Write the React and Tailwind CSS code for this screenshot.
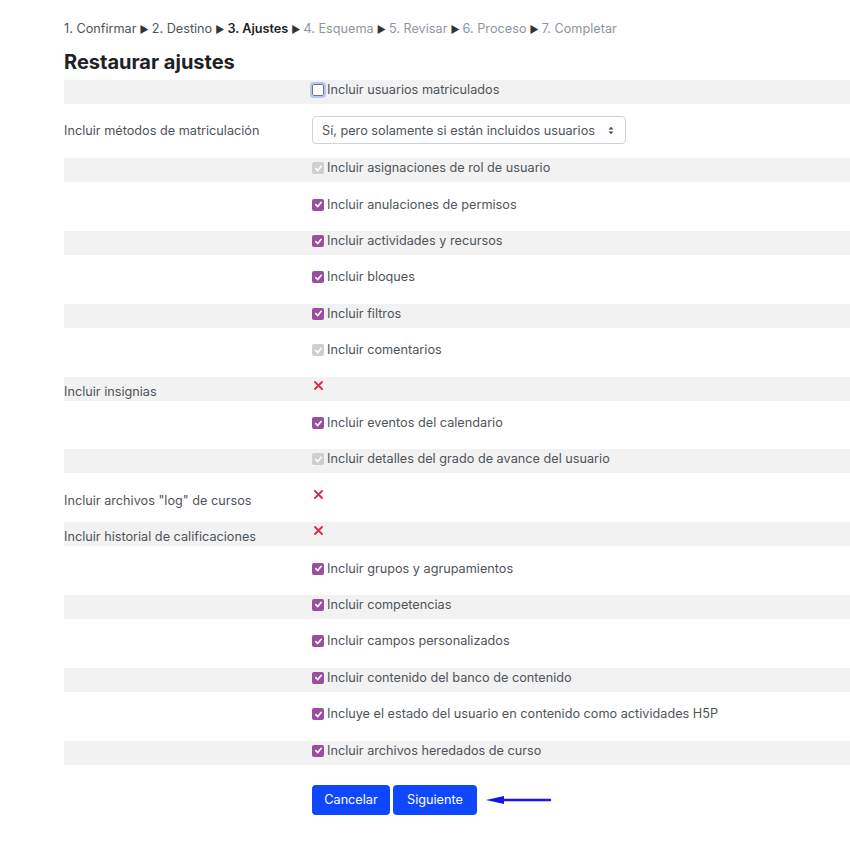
import React from "react";

const STEPS = [
  { text: "1. Confirmar", state: "done" },
  { text: "2. Destino", state: "done" },
  { text: "3. Ajustes", state: "current" },
  { text: "4. Esquema", state: "todo" },
  { text: "5. Revisar", state: "todo" },
  { text: "6. Proceso", state: "todo" },
  { text: "7. Completar", state: "todo" },
];

// kind: check | select | cross ; box: on | off | disabled
const ROWS = [
  { kind: "check", box: "off", text: "Incluir usuarios matriculados" },
  { kind: "select", label: "Incluir métodos de matriculación" },
  { kind: "check", box: "disabled", text: "Incluir asignaciones de rol de usuario" },
  { kind: "check", box: "on", text: "Incluir anulaciones de permisos" },
  { kind: "check", box: "on", text: "Incluir actividades y recursos" },
  { kind: "check", box: "on", text: "Incluir bloques" },
  { kind: "check", box: "on", text: "Incluir filtros" },
  { kind: "check", box: "disabled", text: "Incluir comentarios" },
  { kind: "cross", label: "Incluir insignias" },
  { kind: "check", box: "on", text: "Incluir eventos del calendario" },
  { kind: "check", box: "disabled", text: "Incluir detalles del grado de avance del usuario" },
  { kind: "cross", label: 'Incluir archivos "log" de cursos' },
  { kind: "cross", label: "Incluir historial de calificaciones" },
  { kind: "check", box: "on", text: "Incluir grupos y agrupamientos" },
  { kind: "check", box: "on", text: "Incluir competencias" },
  { kind: "check", box: "on", text: "Incluir campos personalizados" },
  { kind: "check", box: "on", text: "Incluir contenido del banco de contenido" },
  { kind: "check", box: "on", text: "Incluye el estado del usuario en contenido como actividades H5P" },
  { kind: "check", box: "on", text: "Incluir archivos heredados de curso" },
];

function Box({ state }) {
  if (state === "off") {
    return (
      <span className="w-[12px] h-[12px] rounded-[2px] border border-[#767676] bg-white outline outline-2 outline-[#b3c4fb] flex-shrink-0" />
    );
  }
  const bg = state === "on" ? "bg-[#9a4ea0]" : "bg-[#cfcfcf]";
  return (
    <span className={`w-[12px] h-[12px] rounded-[2px] ${bg} flex items-center justify-center flex-shrink-0`}>
      <svg width="9" height="9" viewBox="0 0 10 10">
        <path d="M2 5.2 L4.2 7.3 L8 2.6" fill="none" stroke="white" strokeWidth="1.8" strokeLinecap="round" strokeLinejoin="round" />
      </svg>
    </span>
  );
}

function Cross() {
  return (
    <svg width="9" height="9" viewBox="0 0 9 9" className="ml-[2px] mt-[4px]">
      <path d="M1 1 L8 8 M8 1 L1 8" stroke="#e0283f" strokeWidth="1.8" strokeLinecap="round" />
    </svg>
  );
}

function Row({ row, shaded }) {
  const bg = shaded ? "bg-[#f2f2f2]" : "";

  if (row.kind === "select") {
    return (
      <div className={`flex h-[29.5px] mb-[12.4px] ${bg}`}>
        <div className="w-[248px] pt-[6px] leading-[18px]">{row.label}</div>
        <div className="flex-1">
          <div className="w-[314px] h-[28px] border border-[#ced4da] rounded-[4px] bg-white flex items-center justify-between pl-[9px] pr-[11px] pt-[1px]">
            <span>Sí, pero solamente si están incluidos usuarios</span>
            <svg width="6" height="9" viewBox="0 0 6 9">
              <path d="M0.5 3.5 L3 0.8 L5.5 3.5 Z M0.5 5.5 L3 8.2 L5.5 5.5 Z" fill="#495057" />
            </svg>
          </div>
        </div>
      </div>
    );
  }

  if (row.kind === "cross") {
    return (
      <div className={`flex h-[24px] mb-[12.4px] ${bg}`}>
        <div className="w-[248px] pt-[6px] leading-[18px]">{row.label}</div>
        <div className="flex-1">
          <Cross />
        </div>
      </div>
    );
  }

  return (
    <div className={`flex h-[24px] mb-[12.4px] ${bg}`}>
      <div className="w-[248px]" />
      <div className="flex-1 flex items-start pt-[1px]">
        <div className="flex items-center gap-[2px] h-[18px]">
          <Box state={row.box} />
          <span className="leading-[18px] ml-[1px]">{row.text}</span>
        </div>
      </div>
    </div>
  );
}

export default function App() {
  return (
    <div
      className="min-h-[861px] w-[850px] bg-white pl-[64px] text-[12.7px] text-[#4f545a] overflow-hidden"
      style={{ fontFamily: "Inter, 'Noto Sans', sans-serif" }}
    >
      {/* Steps */}
      <div className="pt-[20px] leading-[18px] flex items-center gap-[3px]">
        {STEPS.map((s, i) => (
          <React.Fragment key={s.text}>
            <span
              className={
                s.state === "current"
                  ? "font-semibold text-[#1d2125]"
                  : s.state === "done"
                  ? "text-[#4f545a]"
                  : "text-[#8f959e]"
              }
            >
              {s.text}
            </span>
            {i < STEPS.length - 1 && <span className="text-[10px] text-[#333]">▶</span>}
          </React.Fragment>
        ))}
      </div>

      <h2 className="mt-[12px] mb-[6px] text-[20px] leading-[24px] font-bold text-[#1d2125]">
        Restaurar ajustes
      </h2>

      <div>
        {ROWS.map((r, i) => (
          <Row key={i} row={r} shaded={i % 2 === 0} />
        ))}
      </div>

      {/* Buttons */}
      <div className="flex items-center pl-[248px] mt-[20px] gap-[3px]">
        <button className="h-[30px] w-[78px] rounded-[4px] bg-[#0f47ff] text-white">Cancelar</button>
        <button className="h-[30px] w-[84px] rounded-[4px] bg-[#0f47ff] text-white">Siguiente</button>
        <svg width="70" height="12" viewBox="0 0 70 12" className="ml-[2px]">
          <path d="M22 6 L68 6" stroke="#1414f0" strokeWidth="2.4" strokeLinecap="round" />
          <path d="M4 6 L22 2 L22 10 Z" fill="#1414f0" />
        </svg>
      </div>
    </div>
  );
}
